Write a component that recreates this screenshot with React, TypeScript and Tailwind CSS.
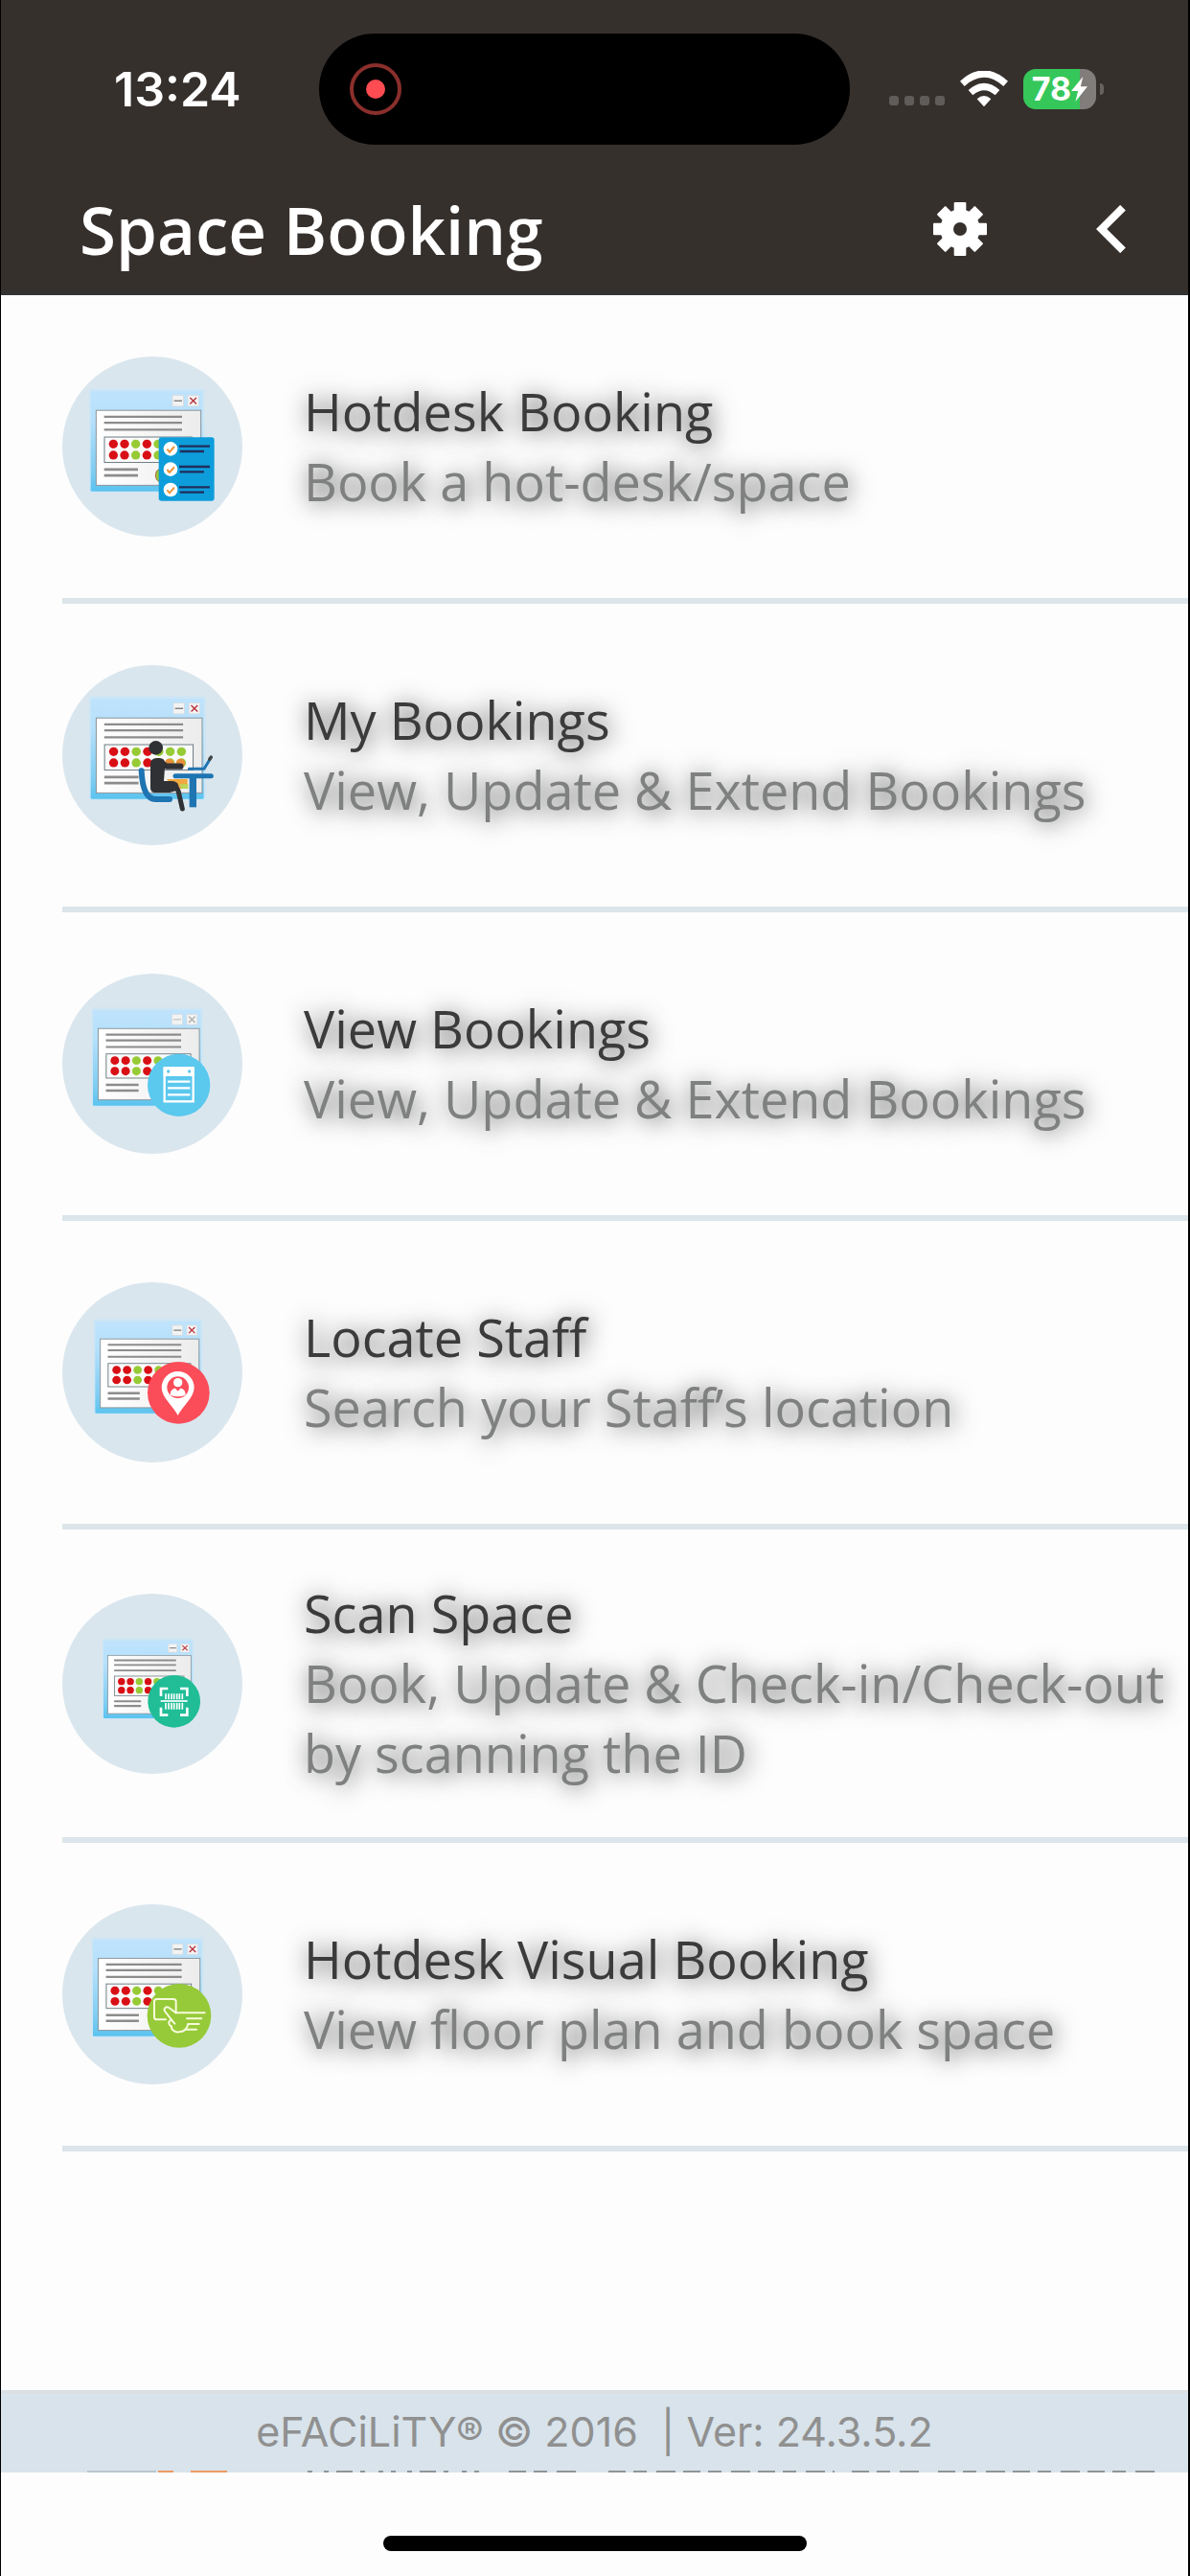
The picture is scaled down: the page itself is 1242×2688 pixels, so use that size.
import type { ReactNode } from "react";

type WinBox = { x: number; y: number; w: number; h: number; soft?: boolean };

function WindowArt({ x, y, w, h, soft }: WinBox) {
  const sx = w / 350;
  const sy = h / 316;
  const red = "#d90f16";
  const green = "#97cb35";
  const cols = [red, red, green, red, green, green, green];
  return (
    <g transform={`translate(${x} ${y}) scale(${sx} ${sy})`}>
      <rect x="-5" y="-8" width="362" height="328" rx="8" fill="#c6e6f8" opacity="0.6" />
      <rect width="350" height="316" rx="4" fill="url(#frame)" />
      <rect x="256" y="14" width="34" height="34" fill="#f3f3f3" stroke="#d8d8d8" strokeWidth="2" />
      <rect x="304" y="14" width="34" height="34" fill="#f3f3f3" stroke="#d8d8d8" strokeWidth="2" />
      <path d="M261 31h25" stroke={soft ? "#c4c4c4" : "#777"} strokeWidth="4" />
      <path d="M311 21l20 20M331 21l-20 20" stroke={soft ? "#a9a9a9" : "#b9303a"} strokeWidth="4" />
      <rect x="17" y="61" width="328" height="236" fill="url(#page)" stroke="#8b9499" strokeWidth="3" />
      <path d="M42 81h244M42 100h244M42 122h244" stroke="#8c8c8c" strokeWidth="7" />
      <rect x="43" y="145" width="274" height="80" fill="#fafafa" stroke="#6d7d83" strokeWidth="3" />
      {cols.map((c, i) => (
        <g key={i} fill={c}>
          <circle cx={71 + i * 35} cy="167" r="14" />
          <circle cx={71 + i * 35} cy="202" r="14" />
        </g>
      ))}
      <path d="M42 247h106M42 266h106" stroke="#8c8c8c" strokeWidth="8" />
    </g>
  );
}

function Icon({ cy, win, children }: { cy: number; win: WinBox; children: ReactNode }) {
  return (
    <svg viewBox={`46 ${cy - 282} 564 564`} className="size-[188px] shrink-0" aria-hidden="true">
      <defs>
        <linearGradient id="frame" x1="0" y1="0" x2="0" y2="1">
          <stop offset="0" stopColor="#bfe3fd" />
          <stop offset="0.3" stopColor="#b5e0fb" />
          <stop offset="0.8" stopColor="#7fcdf3" />
          <stop offset="1" stopColor="#5bc3ef" />
        </linearGradient>
        <linearGradient id="page" x1="0" y1="0" x2="1" y2="0">
          <stop offset="0" stopColor="#ffffff" />
          <stop offset="1" stopColor="#ececec" />
        </linearGradient>
      </defs>
      <circle cx="328" cy={cy} r="282" fill="#dae6ee" />
      <WindowArt {...win} />
      {children}
    </svg>
  );
}

const hotdesk = (
  <Icon cy={318} win={{ x: 135, y: 144, w: 350, h: 314 }}>
    <path d="M350 388q-12 4-12 20t12 20" fill="#97cb35" stroke="#b0664a" strokeWidth="3" />
    <rect x="348" y="289" width="174" height="199" rx="9" fill="#0e9ddb" />
    {[325, 389, 453].map((y) => (
      <g key={y}>
        <circle cx="385" cy={y} r="22" fill="#fff" />
        <path d={`M374 ${y + 1}l8 9 15-17`} fill="none" stroke="#ef9234" strokeWidth="6" />
        <path d={`M412 ${y - 8}h96M414 ${y + 8}h76`} stroke="#1f2f5c" strokeWidth="7" />
      </g>
    ))}
  </Icon>
);

const mine = (
  <Icon cy={321} win={{ x: 135, y: 144, w: 354, h: 314 }}>
    <path d="M372 396h66v30h-30z" fill="#f0a840" />
    <path d="M412 412h28v14h-20z" fill="#b9d65a" />
    <circle cx="381" cy="346" r="14" fill="#e88f3a" />
    <circle cx="416" cy="346" r="14" fill="#e88f3a" />
    <g fill="none" strokeLinecap="round" strokeLinejoin="round">
      <path d="M294 370q4 88 44 89h44" stroke="#1f74b2" strokeWidth="18" />
      <path d="M400 386h112" stroke="#1f74b2" strokeWidth="15" />
      <path d="M455 390v94" stroke="#1f74b2" strokeWidth="22" strokeLinecap="butt" />
      <path d="M443 364h47l22-36" stroke="#1f74b2" strokeWidth="9" />
      <path d="M507 334l5-7" stroke="#444" strokeWidth="10" />
      <path d="M350 342l22 14h44" stroke="#303135" strokeWidth="19" />
      <path d="M340 424h56q12 0 14 12l12 53" stroke="#303135" strokeWidth="15" />
    </g>
    <path
      d="M322 350q0-20 20-20h8q18 0 18 18l-4 54h24q18 0 22 14l2 14-30 8h-46q-14 0-14-14z"
      fill="#303135"
    />
    <circle cx="339" cy="298" r="22" fill="#303135" />
  </Icon>
);

const view = (
  <Icon cy={328} win={{ x: 142, y: 160, w: 338, h: 299, soft: true }}>
    <circle cx="411" cy="395" r="98" fill="#5bc8ee" />
    <rect x="366" y="341" width="90" height="105" fill="none" stroke="#fff" strokeWidth="7" />
    <path d="M363 339h96v28h-96z" fill="#fff" />
    <circle cx="378" cy="352" r="5" fill="#5bc8ee" />
    <circle cx="444" cy="352" r="5" fill="#5bc8ee" />
    <path d="M376 384h70M376 404h70M376 425h70" stroke="#fff" strokeWidth="7" />
  </Icon>
);

const locate = (
  <Icon cy={335} win={{ x: 149, y: 175, w: 330, h: 288 }}>
    <circle cx="410" cy="399" r="97" fill="#fb4c59" />
    <path d="M408 470c-12-26-51-56-51-87a51 51 0 0 1 102 0c0 31-39 61-51 87z" fill="#fff" />
    <circle cx="408" cy="382" r="34" fill="#fb4c59" />
    <circle cx="408" cy="367" r="14" fill="#fff" />
    <path d="M384 406c0-15 8-21 16-21l8 9 8-9c8 0 16 6 16 21q-24 10-48 0z" fill="#fff" />
  </Icon>
);

const scan = (
  <Icon cy={326} win={{ x: 175, y: 190, w: 278, h: 244 }}>
    <circle cx="396" cy="381" r="82" fill="#20bd97" />
    <path
      d="M355 365v-24h22M415 341h22v24M437 400v24h-22M377 424h-22v-24"
      fill="none"
      stroke="#fff"
      strokeWidth="8"
    />
    <path d="M354 380h84" stroke="#fff" strokeWidth="5" />
    <path
      d="M370 357v18M379 357v18M388 357v18M396 357v18M405 357v18M413 357v18M422 357v18M370 386v20M379 386v20M388 386v20M396 386v20M405 386v20M413 386v20M422 386v20"
      stroke="#fff"
      strokeWidth="5"
    />
  </Icon>
);

const visual = (
  <Icon cy={331} win={{ x: 142, y: 160, w: 340, h: 302 }}>
    <circle cx="412" cy="398" r="100" fill="#96ca38" />
    <g fill="none" stroke="#f6fbdc" strokeWidth="6" strokeLinecap="round" strokeLinejoin="round">
      <path d="M370 410h-28q-8 0-8-8v-48q0-8 8-8h52q8 0 8 8v34" />
      <path d="M402 389h90M436 407h46M440 424h34M434 441h32" />
      <path d="M402 389l-22-16c-10-6-18 3-12 12l20 26c-12 4-10 16 0 20c-2 12 14 20 24 18c16 0 24-8 28-24" />
      <path d="M388 411l10 12" />
    </g>
  </Icon>
);

const items: { title: string; text: string; icon: ReactNode }[] = [
  { title: "Hotdesk Booking", text: "Book a hot-desk/space", icon: hotdesk },
  { title: "My Bookings", text: "View, Update & Extend Bookings", icon: mine },
  { title: "View Bookings", text: "View, Update & Extend Bookings", icon: view },
  { title: "Locate Staff", text: "Search your Staff’s location", icon: locate },
  { title: "Scan Space", text: "Book, Update & Check-in/Check-out by scanning the ID", icon: scan },
  { title: "Hotdesk Visual Booking", text: "View floor plan and book space", icon: visual },
];

function StatusBar() {
  return (
    <div className="grid grid-cols-[332px_554px_1fr] items-center pt-[35px] font-['Inter',sans-serif] text-white">
      <time className="pl-[118px] text-[50px] leading-[60px] font-semibold">13:24</time>
      <div className="flex h-[116px] items-center rounded-full bg-black pl-8">
        <span className="flex size-[54px] items-center justify-center rounded-full border-4 border-[#8a2f2c]">
          <span className="size-5 rounded-full bg-[#ff4b52]" />
        </span>
      </div>
      <div className="flex items-center justify-end gap-4 pr-[88px]">
        <span className="mt-6 flex gap-[6px]">
          <span className="size-[10px] rounded-[3px] bg-[#5f5c5a]" />
          <span className="size-[10px] rounded-[3px] bg-[#5f5c5a]" />
          <span className="size-[10px] rounded-[3px] bg-[#5f5c5a]" />
          <span className="size-[10px] rounded-[3px] bg-[#5f5c5a]" />
        </span>
        <svg viewBox="0 0 150 112" className="w-[50px]" aria-label="Wi-Fi" role="img">
          <path d="M75 112L53 88Q75 68 97 88Z" fill="#fff" />
          <path d="M33 68Q75 31 117 68" fill="none" stroke="#fff" strokeWidth="21" />
          <path d="M7 40Q75-22 143 40" fill="none" stroke="#fff" strokeWidth="21" />
        </svg>
        <div className="flex items-center gap-1">
          <span className="flex h-[42px] w-[76px] items-center justify-center rounded-[13px] bg-linear-to-r from-[#35c759] from-78% to-[#807d7b] to-78% text-[34px] leading-none font-bold">
            78
            <svg viewBox="0 0 50 76" className="h-[26px] w-[17px]" aria-hidden="true">
              <path d="M36 0L0 44h21l-8 32 37-46H29z" fill="#fff" />
            </svg>
          </span>
          <span className="h-3 w-1 rounded-r-full bg-[#67625f]" />
        </div>
      </div>
    </div>
  );
}

/* Top edge of the next row, showing just under the footer bar. */
function NextRowEdge() {
  return (
    <svg viewBox="0 0 1239 2" preserveAspectRatio="none" className="block h-[2px] w-full bg-[#d8e3eb]" aria-hidden="true">
      <path d="M90 1h72" stroke="#b9c6cd" strokeWidth="2" />
      <path d="M164 1h16M198 1h38" stroke="#ef9a62" strokeWidth="2" />
      <path d="M320 1h188" stroke="#8f9698" strokeWidth="2" strokeDasharray="5 12 5 8 17 8 5 14 5 8" />
      <path d="M530 1h78M634 1h236M888 1h70M978 1h232" stroke="#8f9698" strokeWidth="2" strokeDasharray="18 8 14 10 20 8" />
    </svg>
  );
}

export default function App() {
  return (
    <div className="flex min-h-screen flex-col border-r-2 border-l border-black bg-[#fdfdfd] font-['Open_Sans','Noto_Sans',sans-serif]">
      <header className="h-[308px] border-b-4 border-[#333333] bg-[#36302d] text-white">
        <StatusBar />
        <div className="flex items-center pt-[42px] pr-[53px] pl-[82px]">
          <h1 className="flex-1 text-[69px] leading-[92px] font-semibold">Space Booking</h1>
          <button type="button" aria-label="Settings" className="mr-[102px]">
            <svg viewBox="0 0 168 168" className="size-14" fill="#fff" aria-hidden="true">
              <mask id="hole">
                <rect width="168" height="168" fill="#fff" />
                <circle cx="84" cy="84" r="21" fill="#000" />
              </mask>
              <g mask="url(#hole)">
                <circle cx="84" cy="84" r="62" />
                {[0, 45, 90, 135].map((a) => (
                  <rect key={a} x="65" y="0" width="38" height="168" rx="3" transform={`rotate(${a} 84 84)`} />
                ))}
              </g>
            </svg>
          </button>
          <button type="button" aria-label="Back" className="px-3">
            <svg viewBox="0 0 93 150" className="h-[50px] w-[31px]" aria-hidden="true">
              <path d="M84 8L17 75l67 67" fill="none" stroke="#fff" strokeWidth="24" />
            </svg>
          </button>
        </div>
      </header>

      <main className="flex-1 pl-[64px]">
        <ul>
          {items.map((it) => (
            <li key={it.title} className="border-b-6 border-[#dbe5ea]">
              <a href="#" className="flex min-h-[316px] items-center gap-[64px] py-[51px]">
                {it.icon}
                <span className="flex-1 text-[54px] leading-[73px] [text-shadow:2px_2px_24px_rgba(0,0,0,0.75)]">
                  <span className="block text-[#3b3b3b]">{it.title}</span>
                  <span className="block text-[#7f8180]">{it.text}</span>
                </span>
              </a>
            </li>
          ))}
        </ul>
      </main>

      <footer>
        <p className="border-t-3 border-[#dcdfe1] bg-[#d8e3eb] text-center font-['Inter',sans-serif] text-[43px] leading-[81px] whitespace-pre text-[#909090]">
          eFACiLiTY® © 2016{"  "}| Ver: 24.3.5.2
        </p>
        <NextRowEdge />
        <div className="flex h-[108px] items-end justify-center pb-[26px]">
          <div className="h-4 w-[442px] rounded-full bg-black" />
        </div>
      </footer>
    </div>
  );
}
